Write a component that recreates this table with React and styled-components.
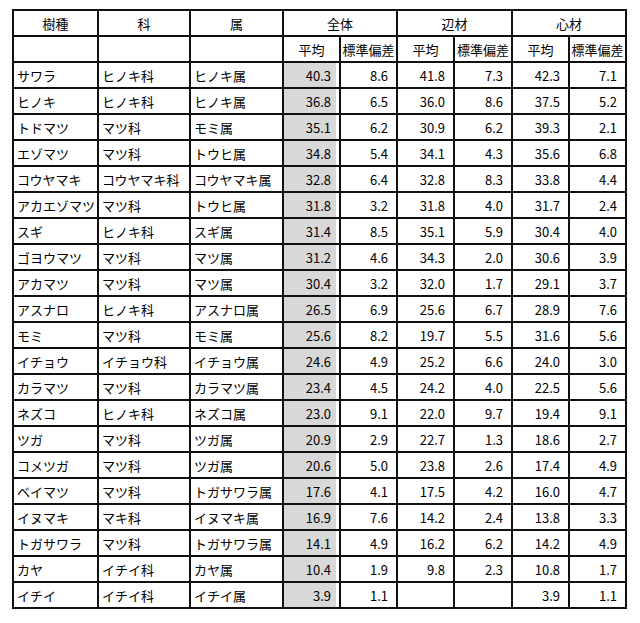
import styled, { createGlobalStyle } from 'styled-components';

const GlobalStyle = createGlobalStyle`
    body {
        margin: 0;
        background: #fff;
        font-family: "Noto Sans CJK JP", "Noto Sans", sans-serif;
        color: #000;
    }
`

const Page = styled.div`
    padding: 9px 12px;
`

const Table = styled.table`
    width: 613px;
    table-layout: fixed;
    border-collapse: collapse;
    font-size: 13px;
    line-height: 1;
`

const Row = styled.tr`
    height: 26px;
`

const HeadCell = styled.th`
    border: 2px solid #111;
    font-weight: 400;
    text-align: center;
    padding: 0;
    white-space: nowrap;
`

const NameCell = styled.td`
    border: 2px solid #111;
    padding: 0 0 0 3px;
    text-align: left;
    white-space: nowrap;
`

const NumCell = styled.td`
    border: 2px solid #111;
    padding: 0 8px 0 0;
    text-align: right;
    background: ${props => props.$shade ? 'linear-gradient(to right, #d8d8d8 calc(100% - 3px), #fff 0)' : '#fff'};
`

const widths = [85, 92, 93, 57, 57, 57, 58, 57, 57]

const rows = [
    ['サワラ', 'ヒノキ科', 'ヒノキ属', '40.3', '8.6', '41.8', '7.3', '42.3', '7.1'],
    ['ヒノキ', 'ヒノキ科', 'ヒノキ属', '36.8', '6.5', '36.0', '8.6', '37.5', '5.2'],
    ['トドマツ', 'マツ科', 'モミ属', '35.1', '6.2', '30.9', '6.2', '39.3', '2.1'],
    ['エゾマツ', 'マツ科', 'トウヒ属', '34.8', '5.4', '34.1', '4.3', '35.6', '6.8'],
    ['コウヤマキ', 'コウヤマキ科', 'コウヤマキ属', '32.8', '6.4', '32.8', '8.3', '33.8', '4.4'],
    ['アカエゾマツ', 'マツ科', 'トウヒ属', '31.8', '3.2', '31.8', '4.0', '31.7', '2.4'],
    ['スギ', 'ヒノキ科', 'スギ属', '31.4', '8.5', '35.1', '5.9', '30.4', '4.0'],
    ['ゴヨウマツ', 'マツ科', 'マツ属', '31.2', '4.6', '34.3', '2.0', '30.6', '3.9'],
    ['アカマツ', 'マツ科', 'マツ属', '30.4', '3.2', '32.0', '1.7', '29.1', '3.7'],
    ['アスナロ', 'ヒノキ科', 'アスナロ属', '26.5', '6.9', '25.6', '6.7', '28.9', '7.6'],
    ['モミ', 'マツ科', 'モミ属', '25.6', '8.2', '19.7', '5.5', '31.6', '5.6'],
    ['イチョウ', 'イチョウ科', 'イチョウ属', '24.6', '4.9', '25.2', '6.6', '24.0', '3.0'],
    ['カラマツ', 'マツ科', 'カラマツ属', '23.4', '4.5', '24.2', '4.0', '22.5', '5.6'],
    ['ネズコ', 'ヒノキ科', 'ネズコ属', '23.0', '9.1', '22.0', '9.7', '19.4', '9.1'],
    ['ツガ', 'マツ科', 'ツガ属', '20.9', '2.9', '22.7', '1.3', '18.6', '2.7'],
    ['コメツガ', 'マツ科', 'ツガ属', '20.6', '5.0', '23.8', '2.6', '17.4', '4.9'],
    ['ベイマツ', 'マツ科', 'トガサワラ属', '17.6', '4.1', '17.5', '4.2', '16.0', '4.7'],
    ['イヌマキ', 'マキ科', 'イヌマキ属', '16.9', '7.6', '14.2', '2.4', '13.8', '3.3'],
    ['トガサワラ', 'マツ科', 'トガサワラ属', '14.1', '4.9', '16.2', '6.2', '14.2', '4.9'],
    ['カヤ', 'イチイ科', 'カヤ属', '10.4', '1.9', '9.8', '2.3', '10.8', '1.7'],
    ['イチイ', 'イチイ科', 'イチイ属', '3.9', '1.1', '', '', '3.9', '1.1'],
]

export default function App() {
    return (
        <Page>
            <GlobalStyle />
            <Table>
                <colgroup>
                    {widths.map((w, i) => <col key={i} style={{ width: w }} />)}
                </colgroup>
                <thead>
                    <Row>
                        <HeadCell>樹種</HeadCell>
                        <HeadCell>科</HeadCell>
                        <HeadCell>属</HeadCell>
                        <HeadCell colSpan={2}>全体</HeadCell>
                        <HeadCell colSpan={2}>辺材</HeadCell>
                        <HeadCell colSpan={2}>心材</HeadCell>
                    </Row>
                    <Row>
                        <HeadCell />
                        <HeadCell />
                        <HeadCell />
                        <HeadCell>平均</HeadCell>
                        <HeadCell>標準偏差</HeadCell>
                        <HeadCell>平均</HeadCell>
                        <HeadCell>標準偏差</HeadCell>
                        <HeadCell>平均</HeadCell>
                        <HeadCell>標準偏差</HeadCell>
                    </Row>
                </thead>
                <tbody>
                    {rows.map(r => (
                        <Row key={r[0]}>
                            <NameCell>{r[0]}</NameCell>
                            <NameCell>{r[1]}</NameCell>
                            <NameCell>{r[2]}</NameCell>
                            {r.slice(3).map((v, i) => (
                                <NumCell key={i} $shade={i === 0}>{v}</NumCell>
                            ))}
                        </Row>
                    ))}
                </tbody>
            </Table>
        </Page>
    )
}
